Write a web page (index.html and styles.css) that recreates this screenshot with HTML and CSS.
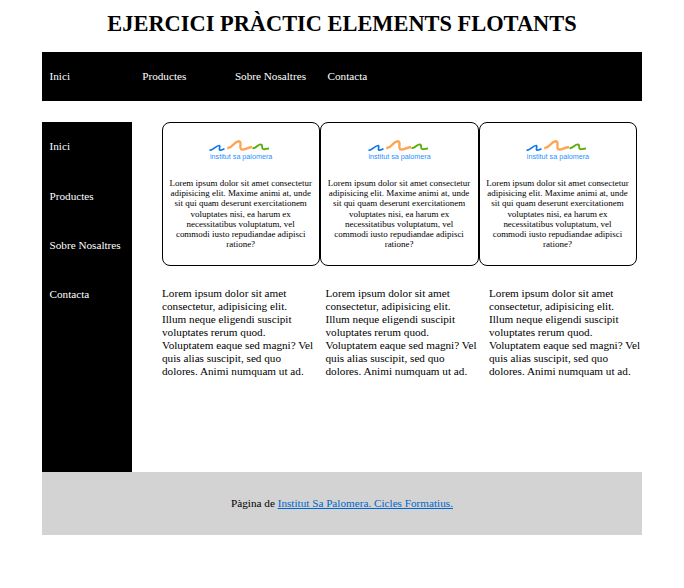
FILE: index.html
```html
<!DOCTYPE html>
<html lang="ca">
<head>
<meta charset="utf-8">
<title>Ejercici pràctic elements flotants</title>
<link rel="stylesheet" href="styles.css">
</head>
<body>
<svg class="defs" aria-hidden="true">
  <symbol id="waves" viewBox="0 0 64 14">
    <path d="M0.500 11.300C4.500 11.300 6.500 6.800 10.300 6.500C12 7.500 9.300 9.800 10.800 11C12 11.700 13.500 10.500 15.500 9.800" fill="none" stroke="#0878e8" stroke-width="1.700"/>
    <path d="M18.300 9.300C24.500 8.500 25 2.300 29.500 2.200C33.500 2.200 30 8.500 32 10.200C34.500 11.700 38 8.500 43 8" fill="none" stroke="#ffa552" stroke-width="2.400"/>
    <path d="M43.500 9.300C48 9 48.500 5.400 51.800 5.400C54.500 5.700 52 9 54 10C55.500 10.700 57.500 9.500 60 9.500" fill="none" stroke="#58ad08" stroke-width="1.900"/>
  </symbol>
</svg>
<div class="page">
  <h1>EJERCICI PRÀCTIC ELEMENTS FLOTANTS</h1>
  <nav class="topnav"><a>Inici</a><a>Productes</a><a>Sobre Nosaltres</a><a>Contacta</a></nav>
  <div class="main">
    <nav class="sidenav"><a>Inici</a><a>Productes</a><a>Sobre Nosaltres</a><a>Contacta</a></nav>
    <main>
      <div class="cards">
        <section class="card">
          <div class="logo"><svg><use href="#waves"/></svg><span>institut sa palomera</span></div>
          <p>Lorem ipsum dolor sit amet consectetur<br>adipisicing elit. Maxime animi at, unde<br>sit qui quam deserunt exercitationem<br>voluptates nisi, ea harum ex<br>necessitatibus voluptatum, vel<br>commodi iusto repudiandae adipisci<br>ratione?</p>
        </section>
        <section class="card">
          <div class="logo"><svg><use href="#waves"/></svg><span>institut sa palomera</span></div>
          <p>Lorem ipsum dolor sit amet consectetur<br>adipisicing elit. Maxime animi at, unde<br>sit qui quam deserunt exercitationem<br>voluptates nisi, ea harum ex<br>necessitatibus voluptatum, vel<br>commodi iusto repudiandae adipisci<br>ratione?</p>
        </section>
        <section class="card">
          <div class="logo"><svg><use href="#waves"/></svg><span>institut sa palomera</span></div>
          <p>Lorem ipsum dolor sit amet consectetur<br>adipisicing elit. Maxime animi at, unde<br>sit qui quam deserunt exercitationem<br>voluptates nisi, ea harum ex<br>necessitatibus voluptatum, vel<br>commodi iusto repudiandae adipisci<br>ratione?</p>
        </section>
      </div>
      <div class="columns">
        <p>Lorem ipsum dolor sit amet<br>consectetur, adipisicing elit.<br>Illum neque eligendi suscipit<br>voluptates rerum quod.<br>Voluptatem eaque sed magni? Vel<br>quis alias suscipit, sed quo<br>dolores. Animi numquam ut ad.</p>
        <p>Lorem ipsum dolor sit amet<br>consectetur, adipisicing elit.<br>Illum neque eligendi suscipit<br>voluptates rerum quod.<br>Voluptatem eaque sed magni? Vel<br>quis alias suscipit, sed quo<br>dolores. Animi numquam ut ad.</p>
        <p>Lorem ipsum dolor sit amet<br>consectetur, adipisicing elit.<br>Illum neque eligendi suscipit<br>voluptates rerum quod.<br>Voluptatem eaque sed magni? Vel<br>quis alias suscipit, sed quo<br>dolores. Animi numquam ut ad.</p>
      </div>
    </main>
  </div>
  <footer>Pàgina de <a href="#">Institut Sa Palomera. Cicles Formatius.</a></footer>
</div>
</body>
</html>
```
FILE: styles.css
```css
* { box-sizing: border-box; }
body {
  margin: 0;
  background: #fff;
  color: #000;
  font: 11.2px/13px "Liberation Serif", "Times New Roman", serif;
}
.defs { display: none; }
.page { width: 600px; margin: 0 auto; }
h1 {
  height: 52px;
  margin: 0;
  padding-top: 11px;
  font-size: 22.4px;
  line-height: 25px;
  text-align: center;
  white-space: nowrap;
}
.topnav {
  display: flex;
  height: 49px;
  padding: 18px 0 0 7.5px;
  background: #000;
  color: #fff;
}
.topnav a { width: 92.7px; }
.main { display: flex; height: 350px; margin-top: 21px; }
.sidenav {
  width: 90px;
  padding: 18.4px 0 0 7.5px;
  background: #000;
  color: #fff;
  white-space: nowrap;
}
.sidenav a { display: block; height: 49.2px; }
main { width: 480px; margin-left: 30px; }
.cards { display: flex; }
.card {
  width: 158.4px;
  height: 144px;
  border: 1px solid #000;
  border-radius: 8px;
  text-align: center;
}
.logo { width: 64px; height: 26px; margin: 16px auto 0; }
.logo svg { display: block; width: 64px; height: 14px; }
.logo span {
  display: block;
  color: #2790ff;
  font: 7.2px/8px "Liberation Sans", Arial, sans-serif;
  white-space: nowrap;
}
.card p {
  margin: 13px 0 0;
  padding-right: 1px;
  font-size: 8.96px;
  line-height: 10.17px;
  white-space: nowrap;
}
.columns { display: flex; gap: 11.5px; margin-top: 21px; }
.columns p { width: 152px; margin: 0; white-space: nowrap; }
footer {
  height: 63px;
  padding-top: 25px;
  background: #d3d3d3;
  text-align: center;
}
footer a { color: #0066cc; }
```
